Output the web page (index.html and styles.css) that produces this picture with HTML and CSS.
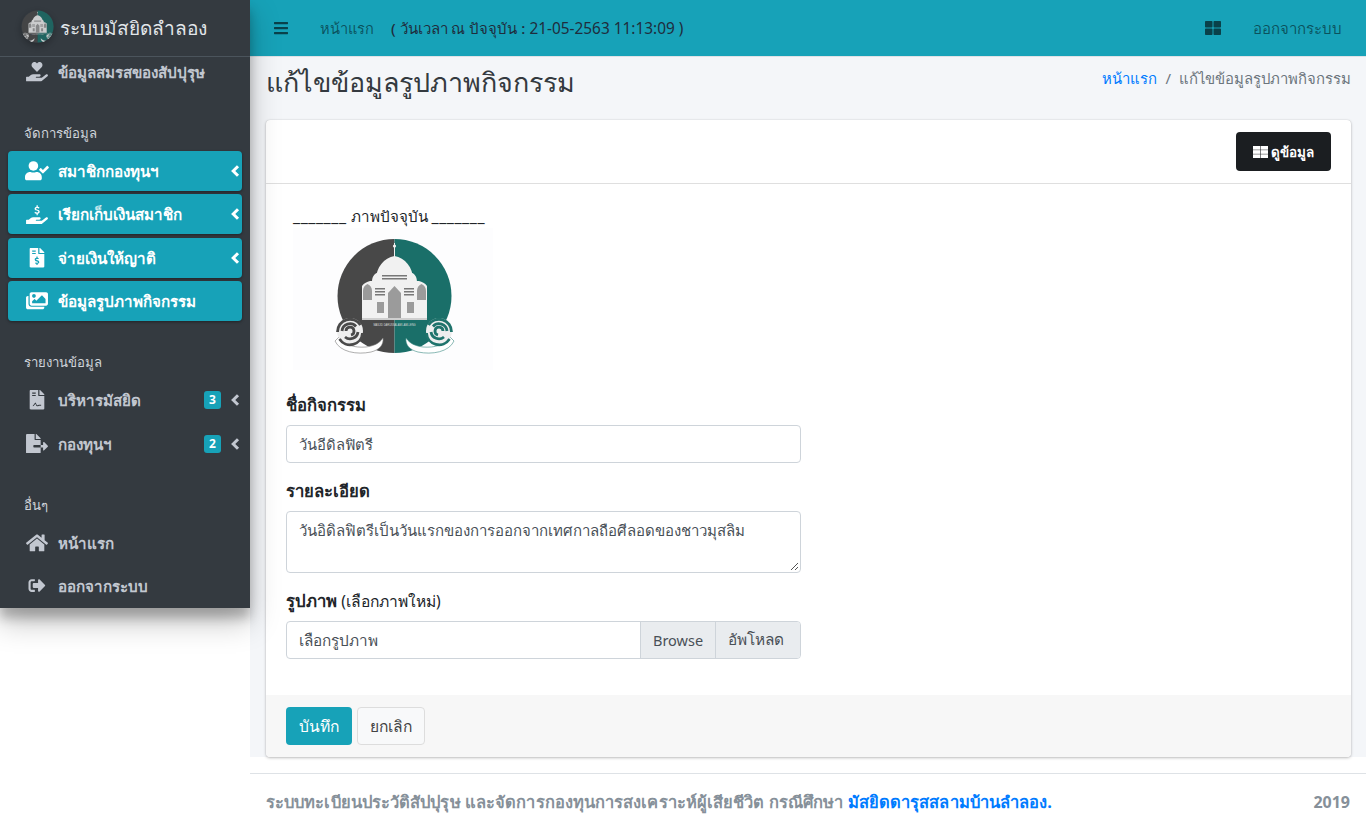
FILE: index.html
```html
<!DOCTYPE html>
<html lang="th">
<head>
<meta charset="utf-8">
<title>แก้ไขข้อมูลรูปภาพกิจกรรม</title>
<link rel="stylesheet" href="styles.css">
</head>
<body>
<svg class="defs" aria-hidden="true">
  <symbol id="logo" viewBox="0 0 200 142">
    <path fill="#484848" d="M101.500 11a57 57 0 0 0 0 114z"/>
    <path fill="#1a6f69" d="M101.500 11a57 57 0 0 1 0 114z"/>
    <g fill="#f1f1f1">
      <path d="M83 52c0-13 8-22 18.500-24c10.500 2 18.500 11 18.500 24z"/>
      <rect x="101" y="15" width="1" height="14"/>
      <circle cx="101.500" cy="18" r="1.600"/>
      <rect x="82" y="46" width="39" height="12"/>
      <path d="M79 54c0-6 3-9 7-10c4 1 8 4 8 10zM109 54c0-6 4-9 8-10c4 1 7 4 7 10z"/>
      <path d="M69 58c2-3 5-4 8-5h49c3 1 6 2 8 5v32H69z"/>
    </g>
    <g fill="#9b9b9b">
      <path d="M70 63q0-5 4.500-7q4.500 2 4.500 7v9h-9zM124 63q0-5 4.500-7q4.500 2 4.500 7v9h-9z"/>
      <path d="M95 92V65l6.500-7l6.500 7v27z"/>
      <rect x="84" y="74" width="7" height="11"/>
      <rect x="114" y="74" width="7" height="11"/>
    </g>
    <g fill="#777">
      <rect x="89" y="47" width="25" height="1.500"/>
      <rect x="89" y="50" width="25" height="1.500"/>
      <rect x="82" y="60" width="10" height="1.500"/>
      <rect x="82" y="63" width="10" height="1.500"/>
      <rect x="82" y="66" width="10" height="1.500"/>
      <rect x="111" y="60" width="10" height="1.500"/>
      <rect x="111" y="63" width="10" height="1.500"/>
      <rect x="111" y="66" width="10" height="1.500"/>
    </g>
    <rect x="69" y="90" width="65" height="2" fill="#cfcfcf"/>
    <text class="logo-cap" x="101.500" y="97.500">MASJID DARUSSALAM LAM-LENG</text>
    <path fill="#fff" stroke="#777" stroke-width=".6" d="M46 109c4 8 16 11 27 10c7-1 13-3 17-9c1 7-4 12-12 14c-14 3-31 0-36-11z"/>
    <path fill="#fff" stroke="#3a8a83" stroke-width=".6" d="M157 109c-4 8-16 11-27 10c-7-1-13-3-17-9c-1 7 4 12 12 14c14 3 31 0 36-11z"/>
    <circle cx="57" cy="103" r="13" fill="#eee"/>
    <circle cx="146" cy="103" r="13" fill="#eee"/>
    <g fill="none" stroke="#4a4a4a" stroke-width="2.800">
      <path d="M44.500 104a12.500 12.500 0 0 1 23-7"/>
      <path d="M69.500 105a12.500 12.500 0 0 1-23 6"/>
      <path d="M49 103a8 8 0 0 1 14-4.500"/>
      <path d="M65 104a8 8 0 0 1-13 5"/>
      <path d="M53 103a4 4 0 1 1 5 4"/>
    </g>
    <g fill="none" stroke="#1f736c" stroke-width="2.800">
      <path d="M158.500 104a12.500 12.500 0 0 0-23-7"/>
      <path d="M133.500 105a12.500 12.500 0 0 0 23 6"/>
      <path d="M154 103a8 8 0 0 0-14-4.500"/>
      <path d="M138 104a8 8 0 0 0 13 5"/>
      <path d="M150 103a4 4 0 1 0-5 4"/>
    </g>
  </symbol>
  <symbol id="hand" viewBox="0 0 576 512"><path d="M565.3 328.1c-11.8-10.7-30.2-10-42.6 0L430.3 402c-11.3 9.1-25.4 14-40 14H272c-8.8 0-16-7.2-16-16s7.2-16 16-16h78.3c15.9 0 30.7-10.9 33.3-26.6 3.3-20-12.1-37.4-31.6-37.4H192c-27 0-53.1 9.3-74.1 26.3L71.4 384H16c-8.8 0-16 7.2-16 16v96c0 8.8 7.2 16 16 16h356.7c14.5 0 28.6-4.9 40-14l151.2-121c15.2-12.2 16.4-35.8 1.4-49.9z"/></symbol>
  <symbol id="chev" viewBox="0 0 10 14"><path d="M8 2.200 L3.200 7 L8 11.800" fill="none" stroke="currentColor" stroke-width="3"/></symbol>
</svg>

<div class="app">
  <aside class="sidebar">
    <div class="brand">
      <svg class="brand-logo"><use href="#logo" x="-11.800" y="-2.600" width="56" height="40"/></svg>
      <span class="brand-text">ระบบมัสยิดลำลอง</span>
    </div>
    <nav class="menu">
      <a class="item item-first">
        <svg class="ico" viewBox="0 0 576 512"><use href="#hand" width="576" height="512"/><path d="M275 250c7 7 18 7 25 0l109-114c32-33 30-88-5-119-31-27-77-22-105 8l-11 12-11-12c-28-30-74-35-105-8-35 31-37 86-5 119z"/></svg>
        <span class="label">ข้อมูลสมรสของสัปปุรุษ</span>
      </a>
      <div class="menu-head">จัดการข้อมูล</div>
      <a class="item active">
        <svg class="ico" viewBox="0 0 640 512"><circle cx="224" cy="128" r="128"/><path d="M314 288h-17c-22 10-46 16-73 16s-51-6-73-16h-17C60 288 0 348 0 422v42c0 27 21 48 48 48h352c27 0 48-21 48-48v-42c0-74-60-134-134-134z"/><path d="M633 159l-28-28c-6-7-16-7-23 0L477 235l-45-46c-7-6-17-6-23 0l-28 28c-7 7-7 17 0 23l85 85c7 7 17 7 23 0l144-143c6-6 6-17 0-23z"/></svg>
        <span class="label">สมาชิกกองทุนฯ</span>
        <svg class="chev"><use href="#chev"/></svg>
      </a>
      <a class="item active">
        <svg class="ico" viewBox="0 0 576 512"><use href="#hand" width="576" height="512"/><path d="M271 144c-31-9-46-20-46-46 0-27 22-45 51-50V8h32v40c18 3 33 9 45 17l-14 32c-12-8-28-15-47-15-19 0-30 8-30 17 0 11 13 16 41 25 37 11 56 27 56 53 0 27-20 47-51 53v42h-32v-40c-23-3-42-11-55-21l14-32c14 10 33 19 55 19 20 0 33-8 33-19 0-13-16-20-52-39z"/></svg>
        <span class="label">เรียกเก็บเงินสมาชิก</span>
        <svg class="chev"><use href="#chev"/></svg>
      </a>
      <a class="item active">
        <svg class="ico" viewBox="0 0 384 512"><path fill-rule="evenodd" d="M224 136V0H24C11 0 0 11 0 24v464c0 13 11 24 24 24h336c13 0 24-11 24-24V160H248c-13 0-24-11-24-24zM64 72c0-4 4-8 8-8h80c4 0 8 4 8 8v16c0 4-4 8-8 8H72c-4 0-8-4-8-8zm0 64c0-4 4-8 8-8h80c4 0 8 4 8 8v16c0 4-4 8-8 8H72c-4 0-8-4-8-8zM208 415v24c0 4-4 8-8 8h-16c-4 0-8-4-8-8v-24c-11-1-22-5-31-11-4-3-4-8-1-11l12-11c3-3 7-3 10-1 4 2 8 3 12 3h28c7 0 12-6 12-13 0-6-4-11-9-12l-45-14c-19-6-32-24-32-44 0-25 19-45 44-46v-24c0-4 4-8 8-8h16c4 0 8 4 8 8v24c11 1 22 5 31 11 4 3 4 8 1 11l-12 11c-3 3-7 3-10 1-4-2-8-3-12-3h-28c-7 0-12 6-12 13 0 6 4 11 9 12l45 14c19 6 32 24 32 44 0 25-19 46-44 46z"/><path d="M377 105L279 7c-4-4-11-7-17-7h-6v128h128v-6c0-6-3-13-7-17z"/></svg>
        <span class="label">จ่ายเงินให้ญาติ</span>
        <svg class="chev"><use href="#chev"/></svg>
      </a>
      <a class="item active">
        <svg class="ico" viewBox="0 0 576 512"><path d="M480 416v16c0 26-22 48-48 48H48c-26 0-48-22-48-48V176c0-26 22-48 48-48h16v208c0 44 36 80 80 80z"/><path fill-rule="evenodd" d="M576 336V80c0-26-22-48-48-48H144c-26 0-48 22-48 48v256c0 26 22 48 48 48h384c26 0 48-22 48-48zM256 128c0 27-21 48-48 48s-48-21-48-48 21-48 48-48 48 21 48 48zm-96 144l56-56c5-5 12-5 17 0l39 40 136-136c5-5 12-5 17 0l87 88v112H160z"/></svg>
        <span class="label">ข้อมูลรูปภาพกิจกรรม</span>
      </a>
      <div class="menu-head">รายงานข้อมูล</div>
      <a class="item">
        <svg class="ico" viewBox="0 0 384 512"><path fill-rule="evenodd" d="M224 136V0H24C11 0 0 11 0 24v464c0 13 11 24 24 24h336c13 0 24-11 24-24V160H248c-13 0-24-11-24-24zM64 72c0-4 4-8 8-8h80c4 0 8 4 8 8v16c0 4-4 8-8 8H72c-4 0-8-4-8-8zm0 64c0-4 4-8 8-8h80c4 0 8 4 8 8v16c0 4-4 8-8 8H72c-4 0-8-4-8-8zM84 400c30-4 50-70 66-70 20 0 20 70 50 70 20 0 36-24 100-10v24c-50-8-70 14-100 14-36 0-36-60-50-60-12 0-30 56-66 56z"/><path d="M377 105L279 7c-4-4-11-7-17-7h-6v128h128v-6c0-6-3-13-7-17z"/></svg>
        <span class="label">บริหารมัสยิด</span>
        <span class="badge">3</span>
        <svg class="chev chev-badge"><use href="#chev"/></svg>
      </a>
      <a class="item">
        <svg class="ico" viewBox="0 0 576 512"><path d="M384 121.900c0-6.300-2.500-12.400-7-16.900L279.100 7c-4.500-4.500-10.600-7-17-7H256v128h128zM571 308l-95.700-96.400c-10.100-10.100-27.400-3-27.400 11.300V288h-64v64h64v65.200c0 14.300 17.300 21.400 27.400 11.300L571 332c6.600-6.600 6.600-17.400 0-24zm-379 28v-32c0-8.800 7.200-16 16-16h176V160H248c-13.200 0-24-10.800-24-24V0H24C10.700 0 0 10.700 0 24v464c0 13.300 10.700 24 24 24h336c13.300 0 24-10.700 24-24V352H208c-8.800 0-16-7.200-16-16z"/></svg>
        <span class="label">กองทุนฯ</span>
        <span class="badge">2</span>
        <svg class="chev chev-badge"><use href="#chev"/></svg>
      </a>
      <div class="menu-head">อื่นๆ</div>
      <a class="item">
        <svg class="ico" viewBox="0 0 576 512"><path d="M280 148L96 300v164c0 9 7 16 16 16l112 0c9 0 16-7 16-16v-96c0-9 7-16 16-16h64c9 0 16 7 16 16v96c0 9 7 16 16 16l112 0c9 0 16-7 16-16V300L296 148c-5-4-11-4-16 0z"/><path d="M572 259l-84-69V51c0-7-5-12-12-12h-56c-7 0-12 5-12 12v73l-89-74c-18-14-44-14-62 0L4 259c-5 4-6 12-2 17l26 31c4 5 12 6 17 2L280 115c5-4 11-4 16 0l235 194c5 4 13 3 17-2l26-31c4-5 3-13-2-17z"/></svg>
        <span class="label">หน้าแรก</span>
      </a>
      <a class="item">
        <svg class="ico ico-small" viewBox="0 0 512 512"><path d="M497 273L329 441c-15 15-41 4-41-17v-96H152c-13 0-24-11-24-24v-96c0-13 11-24 24-24h136V88c0-21 26-32 41-17l168 168c9 10 9 24 0 34zM192 436v-40c0-7-5-12-12-12H96c-18 0-32-14-32-32V160c0-18 14-32 32-32h84c7 0 12-5 12-12V76c0-7-5-12-12-12H96c-53 0-96 43-96 96v192c0 53 43 96 96 96h84c7 0 12-5 12-12z"/></svg>
        <span class="label">ออกจากระบบ</span>
      </a>
    </nav>
  </aside>

  <div class="main">
    <header class="topbar">
      <svg class="top-ico" viewBox="0 0 448 512"><path d="M16 132h416c8.837 0 16-7.163 16-16V76c0-8.837-7.163-16-16-16H16C7.163 60 0 67.163 0 76v40c0 8.837 7.163 16 16 16zm0 160h416c8.837 0 16-7.163 16-16v-40c0-8.837-7.163-16-16-16H16c-8.837 0-16 7.163-16 16v40c0 8.837 7.163 16 16 16zm0 160h416c8.837 0 16-7.163 16-16v-40c0-8.837-7.163-16-16-16H16c-8.837 0-16 7.163-16 16v40c0 8.837 7.163 16 16 16z"/></svg>
      <a class="top-link top-home">หน้าแรก</a>
      <span class="top-date"><span class="date-th">( วันเวลา ณ ปัจจุบัน :</span> 21-05-2563 11:13:09 )</span>
      <svg class="top-ico top-grid" viewBox="0 0 512 512"><path d="M296 32h192c13.255 0 24 10.745 24 24v160c0 13.255-10.745 24-24 24H296c-13.255 0-24-10.745-24-24V56c0-13.255 10.745-24 24-24zm-80 0H24C10.745 32 0 42.745 0 56v160c0 13.255 10.745 24 24 24h192c13.255 0 24-10.745 24-24V56c0-13.255-10.745-24-24-24zM0 296v160c0 13.255 10.745 24 24 24h192c13.255 0 24-10.745 24-24V296c0-13.255-10.745-24-24-24H24c-13.255 0-24 10.745-24 24zm296 184h192c13.255 0 24-10.745 24-24V296c0-13.255-10.745-24-24-24H296c-13.255 0-24 10.745-24 24v160c0 13.255 10.745 24 24 24z"/></svg>
      <a class="top-link top-logout">ออกจากระบบ</a>
    </header>

    <div class="content">
      <div class="page-head">
        <h1 class="page-title">แก้ไขข้อมูลรูปภาพกิจกรรม</h1>
        <div class="crumbs"><a class="link">หน้าแรก</a><span class="crumb-sep">/</span><span class="crumb-now">แก้ไขข้อมูลรูปภาพกิจกรรม</span></div>
      </div>

      <section class="card">
        <div class="card-head">
          <a class="btn btn-dark">
            <svg class="btn-ico" viewBox="0 0 15 12"><rect width="7.250" height="3.700"/><rect x="7.750" width="7.250" height="3.700"/><rect y="4.150" width="7.250" height="3.700"/><rect x="7.750" y="4.150" width="7.250" height="3.700"/><rect y="8.300" width="7.250" height="3.700"/><rect x="7.750" y="8.300" width="7.250" height="3.700"/></svg>ดูข้อมูล
          </a>
        </div>
        <div class="card-body">
          <div class="caption"><span class="rule">_______</span> ภาพปัจจุบัน <span class="rule">_______</span></div>
          <div class="photo"><svg class="photo-svg"><use href="#logo" width="200" height="142"/></svg></div>
          <div class="field">
            <label class="field-label">ชื่อกิจกรรม</label>
            <div class="input">วันอีดิลฟิตรี</div>
          </div>
          <div class="field">
            <label class="field-label">รายละเอียด</label>
            <div class="input textarea">วันอิดิลฟิตรีเป็นวันแรกของการออกจากเทศกาลถือศีลอดของชาวมุสลิม
              <svg class="grip" viewBox="0 0 10 10"><path d="M9 2L2 9M9 6L6 9" stroke="#555" fill="none"/></svg>
            </div>
          </div>
          <div class="field">
            <label class="field-label">รูปภาพ <span class="hint">(เลือกภาพใหม่)</span></label>
            <div class="file-group">
              <div class="file-name">เลือกรูปภาพ</div>
              <div class="file-btn file-browse">Browse</div>
              <div class="file-btn file-upload">อัพโหลด</div>
            </div>
          </div>
        </div>
        <div class="card-foot">
          <a class="btn btn-info">บันทึก</a>
          <a class="btn btn-light">ยกเลิก</a>
        </div>
      </section>
    </div>

    <footer class="footer">
      <span>ระบบทะเบียนประวัติสัปปุรุษ และจัดการกองทุนการสงเคราะห์ผู้เสียชีวิต กรณีศึกษา <a class="link">มัสยิดดารุสสลามบ้านลำลอง.</a></span>
      <span class="footer-year">2019</span>
    </footer>
  </div>
</div>
</body>
</html>
```
FILE: styles.css
```css
* { box-sizing: border-box; }
html, body { margin: 0; height: 830px; overflow: hidden; background: #fff; }
body { font-family: "Noto Sans", "Open Sans", sans-serif; font-size: 16px; line-height: 24px; color: #212529; }
.defs { display: none; }
.logo-cap { font-size: 2.600px; fill: #ddd; text-anchor: middle; font-family: "Liberation Sans", sans-serif; }

.app { display: flex; height: 830px; }

.sidebar { width: 250px; height: 608px; flex: none; background: #343a40; position: relative; z-index: 5; box-shadow: 0 14px 28px rgba(0,0,0,.25), 0 10px 10px rgba(0,0,0,.22); overflow: hidden; }
.brand { height: 57px; display: flex; align-items: center; padding-left: 21px; border-bottom: 1px solid #4b545c; background: #343a40; position: relative; z-index: 1; }
.brand-logo { width: 33px; height: 33px; margin-bottom: 3px; flex: none; border-radius: 50%; opacity: .8; box-shadow: 0 3px 6px rgba(0,0,0,.3); }
.brand-text { margin-left: 6px; font-size: 19.100px; font-weight: 500; color: #e2e6ea; white-space: nowrap; }

.item { display: flex; align-items: center; height: 40px; margin: 0 8px 3.400px; padding: 0 2px 0 17px; border-radius: 4px; color: #c2c7d0; font-weight: 600; font-size: 15.200px; }
.item-first { margin-top: -5px; }
.item.active { background: #17a2b8; color: #fff; box-shadow: 0 1px 3px rgba(0,0,0,.4); }
.ico { width: 24px; height: 19.500px; flex: none; fill: currentColor; }
.ico-small { height: 17px; }
.label { margin-left: 9px; flex: 1; white-space: nowrap; }
.chev { width: 10px; height: 14px; flex: none; color: inherit; }
.chev-badge { margin-left: 9px; }
.badge { width: 17px; height: 18px; margin-left: -1px; border-radius: 3px; background: #17a2b8; color: #fff; font-size: 12px; line-height: 18px; font-weight: 700; text-align: center; }
.menu-head { padding: 25.600px 0 6px 24px; color: #d0d4db; font-size: 13.200px; font-weight: 500; }

.main { flex: 1; min-width: 0; display: flex; flex-direction: column; }
.topbar { height: 57px; flex: none; display: flex; align-items: center; padding-left: 24px; background: #17a2b8; border-bottom: 1px solid #dee2e6; color: rgba(0,0,0,.5); font-size: 15px; }
.top-ico { width: 14px; height: 16px; fill: rgba(0,0,0,.6); flex: none; }
.top-link { color: rgba(0,0,0,.5); white-space: nowrap; }
.top-home { margin-left: 32px; font-size: 14.600px; }
.top-date { margin-left: 17px; color: #1f2d3d; white-space: nowrap; font-size: 15.400px; }
.date-th { font-size: 15px; font-weight: 500; }
.top-grid { margin-left: auto; width: 16px; }
.top-logout { margin-left: 32px; margin-right: 24px; }

.content { flex: none; height: 700px; background: #f4f6f9; padding: 0 15px 0 16px; display: flex; flex-direction: column; }
.page-head { height: 63px; flex: none; display: flex; justify-content: space-between; align-items: flex-start; }
.page-title { margin: 7px 0 0; font-size: 26.900px; line-height: 36px; font-weight: 400; color: #343a40; white-space: nowrap; }
.crumbs { display: flex; margin-top: 9px; font-size: 14.900px; color: #6c757d; white-space: nowrap; }
.crumb-sep { margin: 0 8px; }
.link { color: #007bff; }

.card { flex: 1; background: #fff; border-radius: 4px; box-shadow: 0 0 1px rgba(0,0,0,.2), 0 1px 3px rgba(0,0,0,.25); display: flex; flex-direction: column; }
.card-head { height: 64px; flex: none; display: flex; align-items: center; justify-content: flex-end; padding: 0 20px; border-bottom: 1px solid rgba(0,0,0,.125); }
.card-body { flex: 1; padding: 20px 20px 0; }
.card-foot { height: 62px; flex: none; display: flex; align-items: center; gap: 5px; padding: 0 20px; background: #f7f7f7; border-radius: 0 0 4px 4px; }

.btn { display: flex; align-items: center; height: 38px; padding: 0 12px; border-radius: 4px; border: 1px solid transparent; font-size: 15.600px; white-space: nowrap; }
.btn-dark { width: 95px; height: 39px; padding: 0 16px; background: #1b1e21; color: #fff; font-weight: 600; font-size: 13.400px; }
.btn-ico { width: 15px; height: 12px; margin-right: 3px; fill: #fff; flex: none; }
.btn-info { background: #17a2b8; color: #fff; font-weight: 500; }
.btn-light { background: #f8f9fa; border-color: #ddd; color: #444; }

.caption { margin-left: 7px; font-size: 15.200px; color: #212529; white-space: nowrap; }
.rule { font-size: 16px; letter-spacing: .55px; }
.photo { width: 200px; height: 142px; margin: 0 0 23px 7px; background: #fdfdfe; }
.photo-svg { display: block; width: 200px; height: 142px; }

.field { width: 515px; margin-bottom: 16px; }
.field-label { display: block; height: 24px; margin-bottom: 8px; font-weight: 700; font-size: 16.700px; white-space: nowrap; }
.hint { font-weight: 400; font-size: 15.600px; }
.input { height: 38px; padding: 6px 12px; border: 1px solid #ced4da; border-radius: 4px; color: #495057; font-size: 14.800px; background: #fff; position: relative; }
.textarea { height: 62px; font-size: 15px; }
.grip { position: absolute; right: 1px; bottom: 1px; width: 10px; height: 10px; }
.file-group { display: flex; height: 38px; border: 1px solid #ced4da; border-radius: 4px; color: #495057; font-size: 15.300px; overflow: hidden; }
.file-name { flex: 1; padding: 6px 12px; }
.file-btn { padding: 6px 12px; background: #e9ecef; border-left: 1px solid #ced4da; white-space: nowrap; }
.file-browse { width: 75px; font-size: 14.500px; }
.file-upload { width: 85px; font-size: 15.400px; }

.footer { flex: none; margin-top: 16px; height: 57px; padding: 0 16px; display: flex; justify-content: space-between; align-items: center; border-top: 1px solid #dee2e6; color: #869099; font-weight: 700; font-size: 16.500px; letter-spacing: .08px; background: #fff; white-space: nowrap; }
.footer-year { letter-spacing: 0; font-size: 16px; }
```
